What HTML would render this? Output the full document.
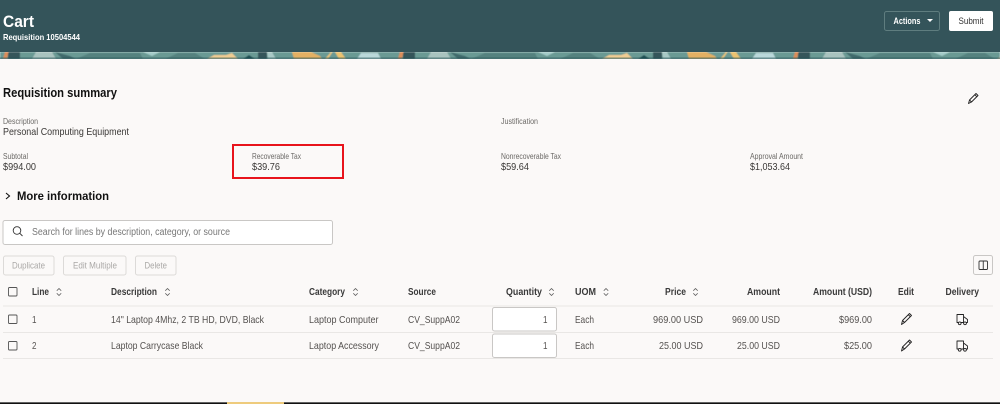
<!DOCTYPE html>
<html lang="en"><head><meta charset="utf-8"><title>Cart</title>
<style>
html,body{margin:0;padding:0;background:#fbf9f8;width:1000px;height:404px;overflow:hidden}
svg{display:block}
text{font-family:"Liberation Sans",sans-serif;fill:#333}
.l{font-size:8px;fill:#6b6966}
.v{font-size:10.500px;fill:#3a3836}
.h{font-size:10px;font-weight:bold;fill:#3a3a3a}
.c{font-size:10.500px;fill:#555250}
.b{font-size:9.500px;fill:#aaa8a6}
.i{fill:none;stroke:#222;stroke-width:.9;stroke-linejoin:round;stroke-linecap:round}
.s{fill:none;stroke:#555;stroke-width:.8;stroke-linecap:round;stroke-linejoin:round}
</style></head><body>
<svg width="1000" height="404" viewBox="0 0 1000 404" xmlns="http://www.w3.org/2000/svg">
<defs>
<filter id="soft" x="0" y="0" width="1" height="1"><feGaussianBlur stdDeviation=".45"/></filter>
<pattern id="band" x="0" y="52" width="395" height="7" patternUnits="userSpaceOnUse">
<rect width="395" height="7" fill="#6a9a94"/>
<rect x="8" width="12" height="7" fill="#34545a"/>
<path d="M3 7L5 0H8.500L7 7Z" fill="#dc8d58"/>
<path d="M32 7L36 0H52L56 7Z" fill="#a9c3bf"/>
<path d="M55 0L63 7H72L76 7L70 4Z" fill="#3f6a6c"/>
<path d="M76 7L90 1H140L143 7Z" fill="#55827f"/>
<path d="M143 0H160L152 4Z" fill="#a3cbc8"/>
<path d="M165 7L178 1H195L205 7Z" fill="#55827f"/>
<path d="M207 7L214 3H226L232 1L238 7Z" fill="#f0cc92"/>
<path d="M243 7L249 3L255 7Z" fill="#1f4f52"/>
<rect x="258" width="9" height="7" fill="#34545a"/>
<path d="M267 0H272L276 7H268Z" fill="#a9c9c6"/>
<path d="M292 0H311L320 4L322 7H294Z" fill="#e3b064"/>
<path d="M325 7L331 0H332.500L328 7Z" fill="#edc578"/>
<path d="M335 0H341L346 7H339Z" fill="#ecc36f"/>
<path d="M357 7L361 1H378L381 7Z" fill="#bad8da"/>
</pattern>
</defs>

<rect width="1000" height="52" fill="#34545a"/>
<rect y="52" width="1000" height="7" fill="url(#band)" filter="url(#soft)"/>
<rect y="57.500" width="1000" height="1.500" fill="#1f4f52" opacity=".55"/>
<rect y="59" width="1000" height="4" fill="#fbf9f8"/>

<text x="3" y="27" font-size="17" font-weight="bold" style="fill:#fff" textLength="31" lengthAdjust="spacingAndGlyphs">Cart</text>
<text x="3" y="40" font-size="8.500" font-weight="bold" style="fill:#fff" textLength="77" lengthAdjust="spacingAndGlyphs">Requisition 10504544</text>

<rect x="884.500" y="11.500" width="55" height="19" rx="2" fill="none" stroke="#5f7d7f"/>
<text x="893.500" y="24" font-size="9.500" font-weight="bold" style="fill:#fff" textLength="27" lengthAdjust="spacingAndGlyphs">Actions</text>
<path d="M927 19H933L930 22Z" fill="#fff"/>
<rect x="949" y="11" width="44" height="20" rx="2" fill="#fff"/>
<text x="958.500" y="24" font-size="9.500" style="fill:#333" textLength="25" lengthAdjust="spacingAndGlyphs">Submit</text>

<text x="3" y="97" font-size="12.500" font-weight="bold" style="fill:#111" textLength="114" lengthAdjust="spacingAndGlyphs">Requisition summary</text>
<path class="i" d="M968.500 103.500L969.500 100L976 93.500L978 95.500L971.500 102ZM969.500 100L971.500 102M974.800 94.700L976.800 96.700"/>

<text class="l" x="3" y="124" textLength="35" lengthAdjust="spacingAndGlyphs">Description</text>
<text class="v" x="3" y="135" textLength="126" lengthAdjust="spacingAndGlyphs">Personal Computing Equipment</text>
<text class="l" x="501" y="124" textLength="37" lengthAdjust="spacingAndGlyphs">Justification</text>

<text class="l" x="3" y="159" textLength="25" lengthAdjust="spacingAndGlyphs">Subtotal</text>
<text class="v" x="3" y="170" textLength="33" lengthAdjust="spacingAndGlyphs">$994.00</text>
<rect x="233" y="145" width="110" height="33" fill="none" stroke="#e8141c" stroke-width="2"/>
<text class="l" x="252" y="159" textLength="49" lengthAdjust="spacingAndGlyphs">Recoverable Tax</text>
<text class="v" x="252" y="170" textLength="28" lengthAdjust="spacingAndGlyphs">$39.76</text>
<text class="l" x="501" y="159" textLength="60" lengthAdjust="spacingAndGlyphs">Nonrecoverable Tax</text>
<text class="v" x="501" y="170" textLength="28" lengthAdjust="spacingAndGlyphs">$59.64</text>
<text class="l" x="750" y="159" textLength="53" lengthAdjust="spacingAndGlyphs">Approval Amount</text>
<text class="v" x="750" y="170" textLength="40" lengthAdjust="spacingAndGlyphs">$1,053.64</text>

<path d="M6 193L9.500 196L6 199" fill="none" stroke="#111" stroke-width="1.100"/>
<text x="17" y="200" font-size="12" font-weight="bold" style="fill:#111" textLength="92" lengthAdjust="spacingAndGlyphs">More information</text>

<rect x="3" y="220.500" width="329.500" height="24" rx="2" fill="#fff" stroke="#c9c7c5"/>
<circle cx="17" cy="230.500" r="3.800" fill="none" stroke="#333" stroke-width=".9"/>
<path d="M19.800 233.300L22.500 236" stroke="#333" stroke-width=".9"/>
<text x="32" y="235" font-size="10" style="fill:#777" textLength="198" lengthAdjust="spacingAndGlyphs">Search for lines by description, category, or source</text>

<rect x="3.500" y="256" width="50.500" height="19" rx="2" fill="none" stroke="#dcdad8"/>
<text class="b" x="12" y="268.500" textLength="33" lengthAdjust="spacingAndGlyphs">Duplicate</text>
<rect x="63.500" y="256" width="62.500" height="19" rx="2" fill="none" stroke="#dcdad8"/>
<text class="b" x="73" y="268.500" textLength="44" lengthAdjust="spacingAndGlyphs">Edit Multiple</text>
<rect x="135.500" y="256" width="40.500" height="19" rx="2" fill="none" stroke="#dcdad8"/>
<text class="b" x="144.500" y="268.500" textLength="22.500" lengthAdjust="spacingAndGlyphs">Delete</text>

<rect x="973.500" y="255.500" width="19" height="19" rx="2" fill="none" stroke="#c9c7c5"/>
<rect x="979" y="261" width="8.500" height="8.500" rx="1" fill="none" stroke="#333" stroke-width=".9"/>
<path d="M983.250 261V269.500" stroke="#333" stroke-width=".9"/>

<!-- header row -->
<rect x="8.500" y="287.500" width="8.500" height="8.500" rx="1" fill="none" stroke="#555" stroke-width=".9"/>
<text class="h" x="32" y="295" textLength="17" lengthAdjust="spacingAndGlyphs">Line</text>
<text class="h" x="111" y="295" textLength="46" lengthAdjust="spacingAndGlyphs">Description</text>
<text class="h" x="309" y="295" textLength="36" lengthAdjust="spacingAndGlyphs">Category</text>
<text class="h" x="408" y="295" textLength="28" lengthAdjust="spacingAndGlyphs">Source</text>
<text class="h" x="506" y="295" textLength="36" lengthAdjust="spacingAndGlyphs">Quantity</text>
<text class="h" x="575" y="295" textLength="21" lengthAdjust="spacingAndGlyphs">UOM</text>
<text class="h" x="665" y="295" textLength="21" lengthAdjust="spacingAndGlyphs">Price</text>
<text class="h" x="747" y="295" textLength="33" lengthAdjust="spacingAndGlyphs">Amount</text>
<text class="h" x="813" y="295" textLength="59" lengthAdjust="spacingAndGlyphs">Amount (USD)</text>
<text class="h" x="898" y="295" textLength="16" lengthAdjust="spacingAndGlyphs">Edit</text>
<text class="h" x="945.500" y="295" textLength="33.500" lengthAdjust="spacingAndGlyphs">Delivery</text>

<path class="s" d="M57 290.500L59 288.500L61 290.500M57 293.500L59 295.500L61 293.500"/>
<path class="s" d="M165.500 290.500L167.500 288.500L169.500 290.500M165.500 293.500L167.500 295.500L169.500 293.500"/>
<path class="s" d="M353.500 290.500L355.500 288.500L357.500 290.500M353.500 293.500L355.500 295.500L357.500 293.500"/>
<path class="s" d="M549.500 290.500L551.500 288.500L553.500 290.500M549.500 293.500L551.500 295.500L553.500 293.500"/>
<path class="s" d="M604 290.500L606 288.500L608 290.500M604 293.500L606 295.500L608 293.500"/>
<path class="s" d="M693.500 290.500L695.500 288.500L697.500 290.500M693.500 293.500L695.500 295.500L697.500 293.500"/>

<path d="M3 306H993M3 332.500H993M3 358.500H993" stroke="#e9e7e5" stroke-width="1"/>

<!-- row 1 -->
<rect x="8.500" y="315" width="8.500" height="8.500" rx="1" fill="none" stroke="#555" stroke-width=".9"/>
<text class="c" x="32" y="323" textLength="4.500" lengthAdjust="spacingAndGlyphs">1</text>
<text class="c" x="111" y="323" textLength="153" lengthAdjust="spacingAndGlyphs">14" Laptop 4Mhz, 2 TB HD, DVD, Black</text>
<text class="c" x="309" y="323" textLength="69.500" lengthAdjust="spacingAndGlyphs">Laptop Computer</text>
<text class="c" x="408" y="323" textLength="52" lengthAdjust="spacingAndGlyphs">CV_SuppA02</text>
<rect x="492.500" y="307.500" width="64" height="23.500" rx="2" fill="#fff" stroke="#c9c7c5"/>
<text class="c" x="543" y="323" textLength="4.500" lengthAdjust="spacingAndGlyphs">1</text>
<text class="c" x="575" y="323" textLength="19" lengthAdjust="spacingAndGlyphs">Each</text>
<text class="c" x="653" y="323" textLength="50" lengthAdjust="spacingAndGlyphs">969.00 USD</text>
<text class="c" x="732" y="323" textLength="48" lengthAdjust="spacingAndGlyphs">969.00 USD</text>
<text class="c" x="839" y="323" textLength="33" lengthAdjust="spacingAndGlyphs">$969.00</text>
<path class="i" d="M901.500 324.500L902.500 320.500L909.500 313.500L911.500 315.500L904.500 322.500ZM902.500 320.500L904.500 322.500M908.300 314.700L910.300 316.700"/>
<path class="i" d="M958.500 322.500H957V314.500H963.500V322.500M963.500 316.500L967.500 319.500V322.500H966.500M961 322.500H963.500"/>
<circle class="i" cx="959.700" cy="323.300" r="1.400"/><circle class="i" cx="965" cy="323.300" r="1.400"/>

<!-- row 2 -->
<rect x="8.500" y="341.500" width="8.500" height="8.500" rx="1" fill="none" stroke="#555" stroke-width=".9"/>
<text class="c" x="32" y="349" textLength="4.500" lengthAdjust="spacingAndGlyphs">2</text>
<text class="c" x="111" y="349" textLength="92" lengthAdjust="spacingAndGlyphs">Laptop Carrycase Black</text>
<text class="c" x="309" y="349" textLength="70" lengthAdjust="spacingAndGlyphs">Laptop Accessory</text>
<text class="c" x="408" y="349" textLength="52" lengthAdjust="spacingAndGlyphs">CV_SuppA02</text>
<rect x="492.500" y="334" width="64" height="23.500" rx="2" fill="#fff" stroke="#c9c7c5"/>
<text class="c" x="543" y="349" textLength="4.500" lengthAdjust="spacingAndGlyphs">1</text>
<text class="c" x="575" y="349" textLength="19" lengthAdjust="spacingAndGlyphs">Each</text>
<text class="c" x="659" y="349" textLength="44" lengthAdjust="spacingAndGlyphs">25.00 USD</text>
<text class="c" x="737" y="349" textLength="43" lengthAdjust="spacingAndGlyphs">25.00 USD</text>
<text class="c" x="844" y="349" textLength="28" lengthAdjust="spacingAndGlyphs">$25.00</text>
<path class="i" d="M901.500 351L902.500 347L909.500 340L911.500 342L904.500 349ZM902.500 347L904.500 349M908.300 341.200L910.300 343.200"/>
<path class="i" d="M958.500 349H957V341H963.500V349M963.500 343L967.500 346V349H966.500M961 349H963.500"/>
<circle class="i" cx="959.700" cy="349.800" r="1.400"/><circle class="i" cx="965" cy="349.800" r="1.400"/>

<!-- bottom bar -->
<rect y="402" width="1000" height="2" fill="#111"/>
<rect y="402" width="1000" height=".6" fill="#999"/>
<rect x="227" y="402" width="57" height="2" fill="#eecb7c"/>
</svg>
</body></html>
